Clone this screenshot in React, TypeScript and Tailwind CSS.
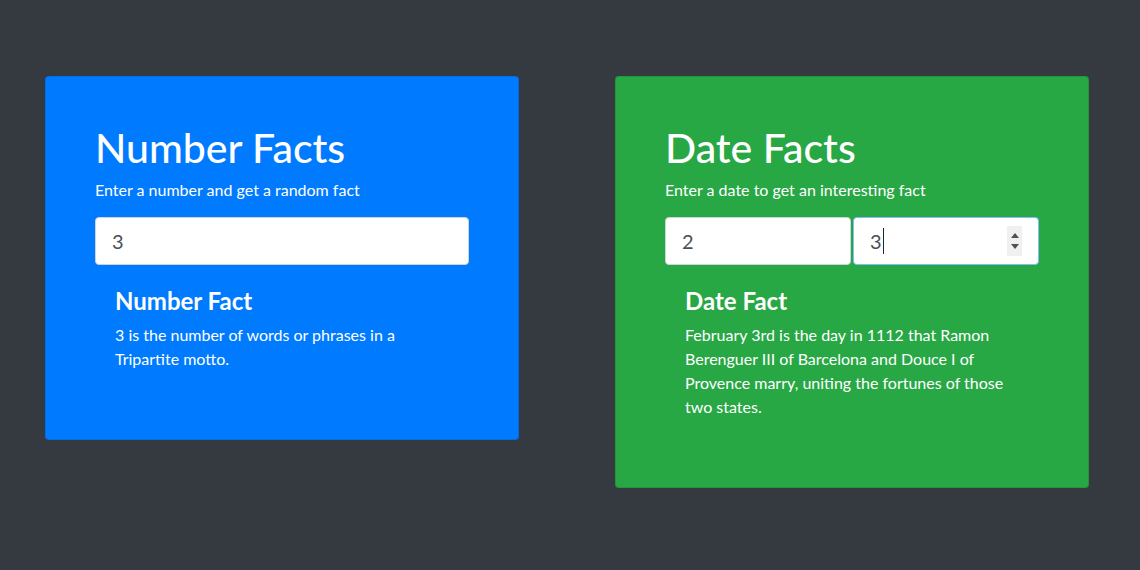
import React from 'react';

const font = { fontFamily: '"Segoe UI", Lato, "Liberation Sans", sans-serif' };

interface FactCardProps {
  title: string;
  subtitle: string;
  factTitle: string;
  fact: string;
  bg: string;
  children: React.ReactNode;
}

const FactCard: React.FC<FactCardProps> = ({ title, subtitle, factTitle, fact, bg, children }) => (
  <div className={`w-[474px] rounded-[4px] border border-black/10 pt-[47px] pb-[52px] pl-[49px] pr-[49px] text-white ${bg}`}>
    <h1 className="text-[41px] leading-[48px] font-medium mb-[6px]">{title}</h1>
    <p className="text-[16px] leading-[24px] mb-[15px]">{subtitle}</p>
    {children}
    <div className="px-5 mt-[21px]">
      <h4 className="text-[24px] leading-[29px] font-bold mb-2">{factTitle}</h4>
      <p className="text-[16px] leading-[24px] mb-4">{fact}</p>
    </div>
  </div>
);

const FakeInput: React.FC<{ value: string; focused?: boolean; spinner?: boolean; className?: string }> = ({
  value,
  focused,
  spinner,
  className = '',
}) => (
  <div
    className={`relative h-[48px] bg-white rounded-[4px] border flex items-center px-4 text-[20px] text-[#495057] ${
      focused ? 'border-[#80bdff]' : 'border-[#ced4da]'
    } ${className}`}
  >
    <span>{value}</span>
    {focused && <span className="w-px h-[26px] bg-[#212529] ml-px" />}
    {spinner && (
      <div className="absolute right-[16px] top-[8px] w-[15px] h-[30px] bg-[#f0f0f0] flex flex-col items-center justify-center gap-[6px]">
        <svg width="8" height="5" viewBox="0 0 8 5">
          <path d="M0 5 L4 0 L8 5 Z" fill="#505050" />
        </svg>
        <svg width="8" height="5" viewBox="0 0 8 5">
          <path d="M0 0 L8 0 L4 5 Z" fill="#505050" />
        </svg>
      </div>
    )}
  </div>
);

export default function App() {
  return (
    <div className="min-h-[570px] bg-[#343a40] pt-[76px] pl-[45px]" style={font}>
      <div className="flex items-start gap-[96px]">
        <FactCard
          title="Number Facts"
          subtitle="Enter a number and get a random fact"
          factTitle="Number Fact"
          fact="3 is the number of words or phrases in a Tripartite motto."
          bg="bg-[#007bff]"
        >
          <FakeInput value="3" />
        </FactCard>
        <FactCard
          title="Date Facts"
          subtitle="Enter a date to get an interesting fact"
          factTitle="Date Fact"
          fact="February 3rd is the day in 1112 that Ramon Berenguer III of Barcelona and Douce I of Provence marry, uniting the fortunes of those two states."
          bg="bg-[#28a745]"
        >
          <div className="flex gap-[2px]">
            <FakeInput value="2" className="flex-1" />
            <FakeInput value="3" focused spinner className="flex-1" />
          </div>
        </FactCard>
      </div>
    </div>
  );
}
